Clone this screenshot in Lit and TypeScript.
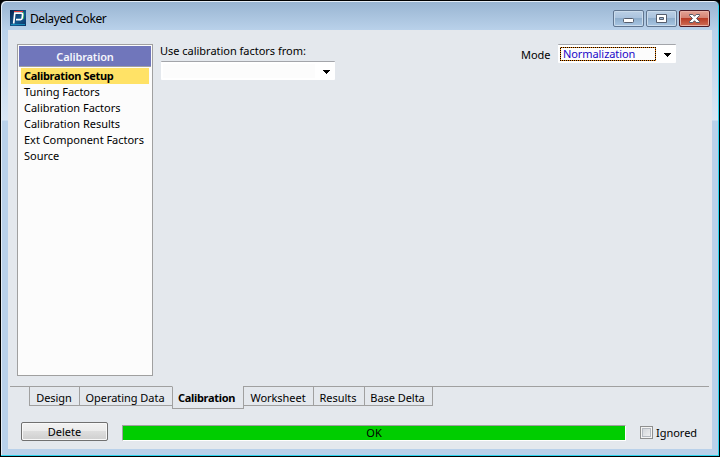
import { LitElement, html, css, svg } from "lit";
import { customElement, property } from "lit/decorators.js";
import { classMap } from "lit/directives/class-map.js";

@customElement("combo-box")
class ComboBox extends LitElement {
  @property() value = "";
  @property({ type: Boolean }) focused = false;

  static styles = css`
    :host { display: flex; box-sizing: border-box; height: 19px; background: #fff;
      border-top: 1px solid #a3a5aa; border-radius: 1px; align-items: center; }
    .value { box-sizing: border-box; flex: 1; height: 14px; margin: 0 0 0 2px; line-height: 13px;
      padding-left: 2px; color: #1a08c8; background: #fcfcfc; white-space: nowrap; border: 1px solid transparent; letter-spacing: -0.08px; }
    .focus { border: 1px solid transparent; line-height: 12px;
      background: linear-gradient(#fcfcfc, #fcfcfc) padding-box,
        repeating-conic-gradient(#000 0 25%, #f08a1c 0 50%) 0 0 / 2px 2px border-box; }
    svg { width: 20px; height: 18px; flex: none; }
  `;
  render() {
    return html`<div class=${classMap({ value: true, focus: this.focused })}>${this.value}</div>
      <svg viewBox="0 0 20 18" shape-rendering="crispEdges"><path d="M8 8h7v1h-1v1h-1v1h-1v1h-1v-1h-1v-1h-1v-1h-1z" /></svg>`;
  }
}

@customElement("app-root")
class AppRoot extends LitElement {
  pages = ["Calibration Setup", "Tuning Factors", "Calibration Factors", "Calibration Results", "Ext Component Factors", "Source"];
  tabs = [
    { name: "Design", cls: "t1" },
    { name: "Operating Data", cls: "t2" },
    { name: "Calibration", cls: "t3 active" },
    { name: "Worksheet", cls: "t4" },
    { name: "Results", cls: "t5" },
    { name: "Base Delta", cls: "t6" },
  ];

  static styles = css`
    * { box-sizing: border-box; }
    :host { display: block; width: 720px; height: 457px; background: #000; overflow: hidden;
      font: 11px/16px "Noto Sans", "Open Sans", sans-serif; color: #000; letter-spacing: -0.02px; }
    .window { height: 457px; display: grid; grid-template-rows: 29px 419px; padding: 0 7px;
      border: 1px solid #000; border-radius: 6px 6px 0 0;
      background: linear-gradient(#98b4d1 0, #b9d1ea 29px, #dae7f5 119px, #b9d1ea 120px);
      box-shadow: inset -1px -1px #2bd4ee, inset 1px 1px #e4edf6; }
    .title { display: flex; align-items: flex-start; font-size: 12px; }
    .logo { width: 16px; height: 16px; margin: 9px 4px 0 2px; }
    .caption { flex: 1; padding-top: 10px; line-height: 16px; letter-spacing: -0.42px; }
    .controls { display: flex; gap: 2px; padding: 9px 2px 0 0; }
    .controls svg { width: 31px; height: 17px; }
    .client { background: #e4e8ed; display: grid; grid-template-rows: 356px 23px 40px; min-width: 0; }
    .body { display: flex; padding: 14px 0 0 9px; }
    .pages { width: 136px; height: 332px; border: 1px solid #a0a0a0; background: #fcfcfc; padding: 1px; }
    .head { height: 21px; background: #7076bb; border-bottom: 1px solid #a0a0a0; color: #f4f5fc; font-weight: 600;
      text-align: center; line-height: 21px; letter-spacing: -0.15px; }
    .list { padding: 1px 2px 0; }
    .row { height: 16px; padding-left: 3px; line-height: 16px; white-space: nowrap; }
    .row.selected { background: #ffe266; font-weight: 700; letter-spacing: -0.32px; }
    .source { margin: -1px 0 0 7px; width: 175px; white-space: nowrap; }
    .source combo-box { margin: 2px 0 0 1px; height: 19px; }
    .mode { display: flex; align-items: flex-start; margin-left: 186px; }
    .mode span { width: 37px; padding-top: 3px; }
    .mode combo-box { width: 118px; height: 19px; }
    .tabs { display: flex; align-items: flex-start; margin: 0 3px 0 2px; }
    .lead { width: 19px; border-top: 1px solid #a0a0a0; }
    .rest { flex: 1; border-top: 1px solid #a0a0a0; }
    .tab { height: 20px; border: 1px solid #a0a0a0; border-right: 0; text-align: center; line-height: 22px; white-space: nowrap;
      letter-spacing: -0.04px; padding-right: 1px; }
    .active { height: 23px; border-top-color: transparent; border-right: 1px solid #a0a0a0; margin-right: -1px;
      padding-right: 3px; font-weight: 700; line-height: 22px; letter-spacing: -0.3px; }
    .t1 { width: 50px; } .t2 { width: 93px; padding-right: 2px; } .t3 { width: 72px; }
    .t4 { width: 70px; } .t5 { width: 51px; padding-right: 2px; } .t6 { width: 69px; border-right: 1px solid #a0a0a0; padding-right: 2px; }
    .footer { display: flex; padding: 13px 0 0 13px; }
    .delete { width: 87px; height: 19px; border: 1px solid #707070; border-radius: 2px; text-align: center; line-height: 18px;
      background: linear-gradient(#f2f2f2, #ebebeb 49%, #dddddd 50%, #cfcfcf); box-shadow: inset 0 0 0 1px #f8f8f8; }
    .status { width: 504px; height: 16px; margin: 3px 0 0 14px; background: #00cd00; border-top: 1px solid #a0a0a0;
      border-right: 1px solid #fff; border-bottom: 1px solid #fff; border-left: 1px solid #a0a0a0; text-align: center; line-height: 14px; }
    .ignored { display: flex; margin: 4px 0 0 14px; }
    .check { width: 13px; height: 13px; border: 1px solid #8e8f8f; background: linear-gradient(135deg, #cbcfd5, #f6f6f6);
      box-shadow: inset 0 0 0 1px #f4f4f4, inset 0 0 0 2px #b4b9c0; margin-right: 3px; }
    .ignored span { line-height: 13px; }
  `;

  control(kind: "min" | "max" | "close") {
    const close = kind === "close";
    const glyph = {
      min: svg`<rect x="10.5" y="8.5" width="10" height="4" rx="1" fill="#fff" stroke="#555d6c"/>`,
      max: svg`<path d="M10.5 4.5h10v8h-10z" fill="#fff" stroke="#555d6c"/><path d="M13.5 7.5h4v2h-4z" fill="#9cb8d5" stroke="#555d6c"/>`,
      close: svg`<path d="M10.5 4.5h3.3l1.7 1.8 1.7-1.8h3.3v1l-3 3 3 3v1h-3.3l-1.7-1.8-1.7 1.8h-3.3v-1l3-3-3-3z" fill="#fff" stroke="#565b69"/>`,
    }[kind];
    const id = `face-${kind}`;
    return html`<svg viewBox="0 0 31 17">
      <defs><linearGradient id=${id} x2="0" y2="1">
        <stop offset="0" stop-color=${close ? "#e5a698" : "#bdd1e6"} /><stop offset=".48" stop-color=${close ? "#d48070" : "#a9c2dd"} />
        <stop offset=".5" stop-color=${close ? "#b93c25" : "#8faecc"} /><stop offset="1" stop-color=${close ? "#cf715a" : "#aac8e5"} />
      </linearGradient></defs>
      <rect x=".5" y=".5" width="30" height="16" rx="1.5" fill="url(#${id})" stroke=${close ? "#4c1a25" : "#60758f"} />
      <rect x="1.5" y="1.5" width="28" height="14" rx="1" fill="none" stroke=${close ? "#e9b1a5" : "#cbdcec"} />
      ${glyph}</svg>`;
  }

  render() {
    return html`<div class="window">
      <div class="title">
        <svg class="logo" viewBox="0 0 16 16">
          <defs><linearGradient id="b" x2="1" y2="1"><stop stop-color="#071f48" /><stop offset=".6" stop-color="#14588f" /><stop offset="1" stop-color="#0b3264" /></linearGradient></defs>
          <path fill="url(#b)" d="M0 0h16v16H0z" />
          <path d="M1 14.5h14" stroke="#168cba" />
          <path d="M4 1.5h9" stroke="#e33c3c" /><path d="M13.5 2v7" stroke="#28a85b" />
          <path d="M3.7 13.5 4.8 3.2h6.4q1.6 0 1.4 1.6L12.2 8q-.2 1.6-1.7 1.6H6" fill="none" stroke="#fff" stroke-width="1.7" />
        </svg>
        <div class="caption">Delayed Coker</div>
        <div class="controls">${this.control("min")}${this.control("max")}${this.control("close")}</div>
      </div>
      <div class="client">
        <div class="body">
          <div class="pages"><div class="head">Calibration</div><div class="list">
            ${this.pages.map((p, i) => html`<div class=${classMap({ row: true, selected: i === 0 })}>${p}</div>`)}
          </div></div>
          <div class="source"><div>Use calibration factors from:</div><combo-box></combo-box></div>
          <div class="mode"><span>Mode</span><combo-box value="Normalization" focused></combo-box></div>
        </div>
        <div class="tabs"><div class="lead"></div>${this.tabs.map((t) => html`<div class="tab ${t.cls}">${t.name}</div>`)}<div class="rest"></div></div>
        <div class="footer">
          <div class="delete">Delete</div><div class="status">OK</div>
          <div class="ignored"><div class="check"></div><span>Ignored</span></div>
        </div>
      </div>
    </div>`;
  }
}
